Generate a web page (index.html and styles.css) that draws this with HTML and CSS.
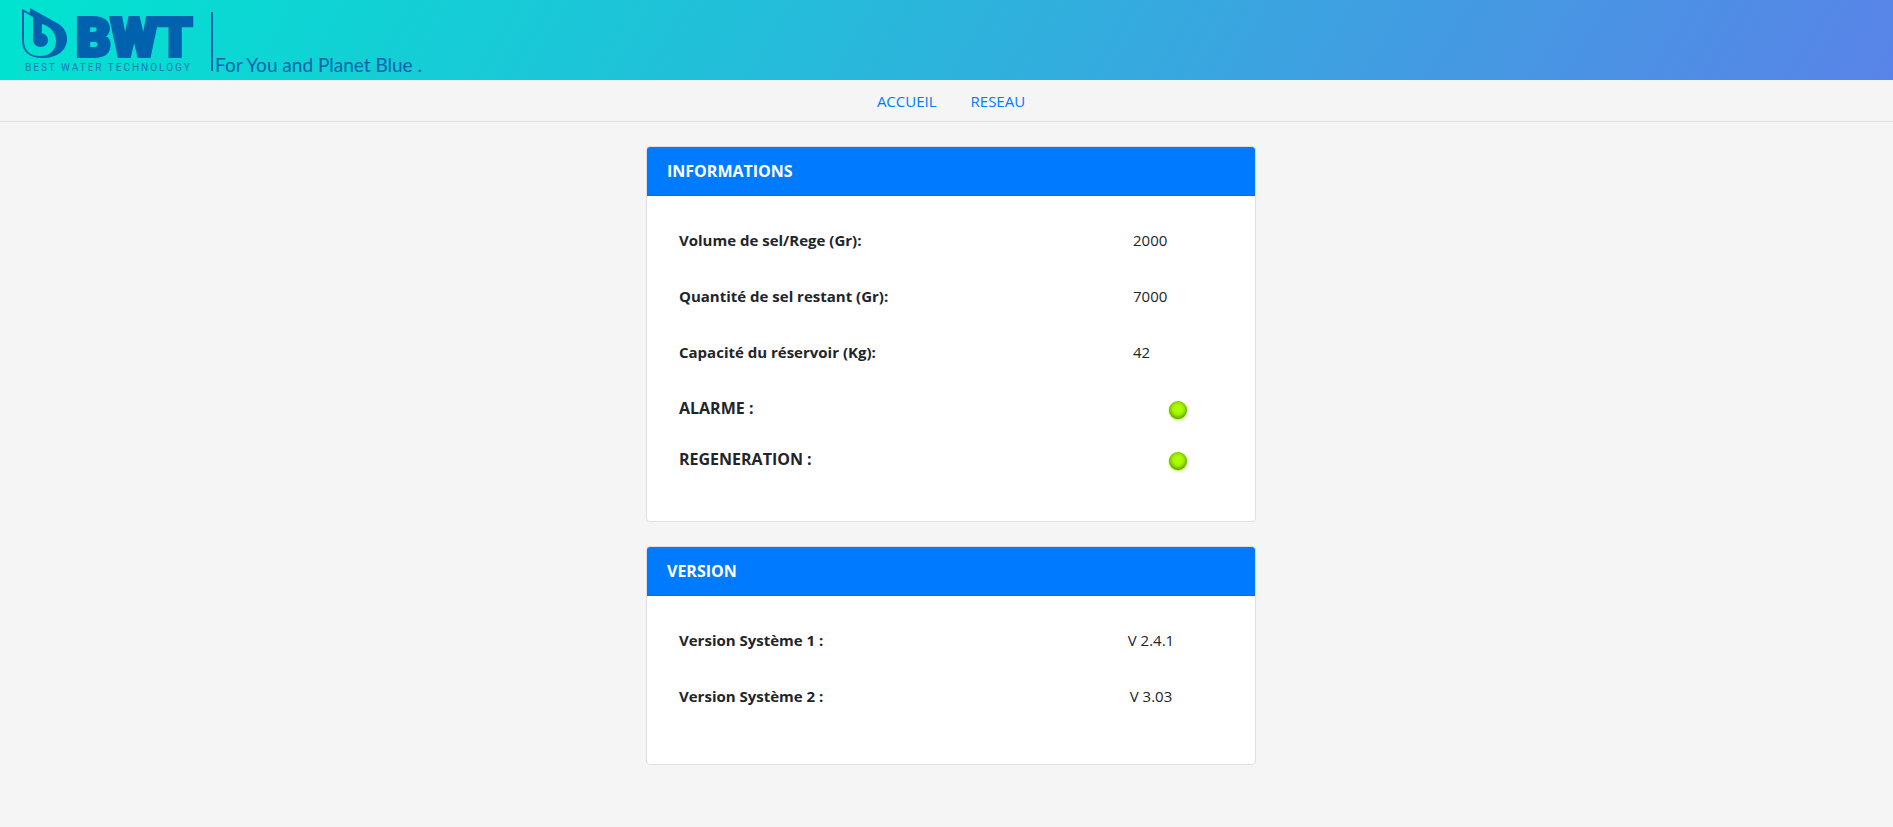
FILE: index.html
```html
<!DOCTYPE html>
<html lang="fr">
<head>
<meta charset="utf-8">
<title>BWT</title>
<link rel="stylesheet" href="styles.css">
</head>
<body>
<header class="banner">
  <svg class="logo-mark" viewBox="0 0 48 52" aria-hidden="true">
    <path fill="#0062ae" fill-rule="evenodd" d="M1 1 L9 5 V0 L36 15 C43 19 46 24 46 31 C46 42 37 50 21 50 C8 50 1 43 1 33 Z M3 4 V33 C3 42 9 48 19 48 C29 48 35 42 35 33 C35 25 30 19 21 16 V25 C24 26 27 28 27 32 C27 36 24 39 20 39 C15 39 12 36 12 31 V9 Z"/>
  </svg>
  <span class="wordmark">BWT</span>
  <p class="descriptor">BEST WATER TECHNOLOGY</p>
  <p class="tagline">For You and Planet Blue .</p>
</header>
<nav class="menu">
  <a href="#accueil">ACCUEIL</a>
  <a href="#reseau">RESEAU</a>
</nav>
<main class="content">
  <section class="card">
    <h2 class="card-title">INFORMATIONS</h2>
    <table class="data">
      <tr><th scope="row">Volume de sel/Rege (Gr):</th><td class="number">2000</td></tr>
      <tr><th scope="row">Quantité de sel restant (Gr):</th><td class="number">7000</td></tr>
      <tr><th scope="row">Capacité du réservoir (Kg):</th><td class="number">42</td></tr>
      <tr class="status"><th scope="row">ALARME :</th><td><span class="led"></span></td></tr>
      <tr class="status"><th scope="row">REGENERATION :</th><td><span class="led"></span></td></tr>
    </table>
  </section>
  <section class="card">
    <h2 class="card-title">VERSION</h2>
    <table class="data">
      <tr><th scope="row">Version Système 1 :</th><td class="release">V 2.4.1</td></tr>
      <tr><th scope="row">Version Système 2 :</th><td class="release">V 3.03</td></tr>
    </table>
  </section>
</main>
</body>
</html>
```
FILE: styles.css
```css
* { box-sizing: border-box; }
body {
  margin: 0;
  background: #f5f5f5;
  color: #212529;
  font: 15px/24px "Open Sans", "Noto Sans", sans-serif;
}
.banner {
  display: grid;
  grid-template: 53px 18px / 50px 140px auto;
  justify-content: start;
  padding: 8px 21px 1px;
  background: linear-gradient(120deg, #00e4d0, #5983e8);
  color: #0062ae;
}
.logo-mark { width: 48px; height: 52px; }
.wordmark {
  padding: 7px 0 0 5px;
  font: 900 54px/45px Roboto, sans-serif;
  -webkit-text-stroke: 4px #0062ae;
}
.descriptor {
  grid-area: 2 / 1 / 3 / 3;
  margin: 0;
  padding-left: 4px;
  color: #1479b8;
  font: 10px/14px Roboto, sans-serif;
  letter-spacing: 2px;
}
.tagline {
  grid-area: 1 / 3 / 3 / 4;
  align-self: start;
  height: 59px;
  margin: 4px 0 0;
  padding: 41px 0 0 2px;
  border-left: 2px solid #0062ae;
  font: 19px/24px Lato, sans-serif;
}
.menu {
  display: flex;
  justify-content: center;
  gap: 34px;
  padding: 9px 0 8px 9px;
  border-bottom: 1px solid #dee2e6;
}
.menu a { color: #007bff; text-decoration: none; }
.content {
  display: flex;
  flex-direction: column;
  align-items: center;
  gap: 24px;
  padding: 24px 0 24px 9px;
}
.card {
  width: calc(100% / 3 - 18px);
  background: #fff;
  border: 1px solid #dfdfdf;
  border-radius: 4px;
  overflow: hidden;
}
.card-title {
  margin: 0;
  padding: 12px 20px;
  background: #007bff;
  border-bottom: 1px solid #0070e8;
  color: #fff;
  font-size: 16px;
  line-height: 24px;
}
.data {
  width: calc(100% - 32px);
  margin: 16px 16px 40px;
  border-collapse: collapse;
  table-layout: fixed;
}
.data th, .data td { padding: 16px; vertical-align: top; }
.data th { text-align: left; font-weight: 700; }
.data td { width: 122px; text-align: center; }
.data td.number { text-align: left; }
.data td.release { padding: 16px 54px 16px 0; white-space: nowrap; }
.data .status th { padding-bottom: 11px; font-size: 16px; }
.data .status td { padding-bottom: 0; }
.data .status:last-child th { padding-bottom: 10px; }
.led {
  display: block;
  width: 18px;
  height: 18px;
  margin: 5px auto 0;
  border-radius: 50%;
  background: #abff00;
  box-shadow: inset 0 -1px 5px #4c7001, 0 1px 2px #89ff00;
}
```
